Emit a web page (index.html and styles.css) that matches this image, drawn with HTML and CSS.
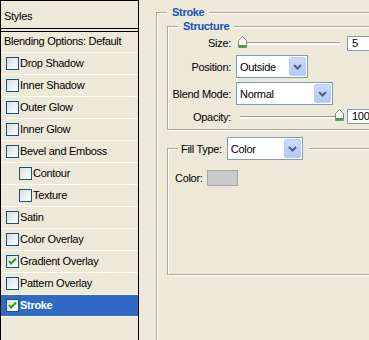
FILE: index.html
```html
<!DOCTYPE html>
<html>
<head>
  <title>Layer Style</title>
<link rel="stylesheet" href="styles.css">
</head>
<body>
  <div class="dialog">
    <div class="styles">
      <div class="styles-head">Styles</div>
      <ul class="fx-list">
        <li class="fx-plain">Blending Options: Default</li>
        <li class="fx-item"><span class="cb"></span>Drop Shadow</li>
        <li class="fx-item"><span class="cb"></span>Inner Shadow</li>
        <li class="fx-item"><span class="cb"></span>Outer Glow</li>
        <li class="fx-item"><span class="cb"></span>Inner Glow</li>
        <li class="fx-item"><span class="cb"></span>Bevel and Emboss</li>
        <li class="fx-item sub"><span class="cb"></span>Contour</li>
        <li class="fx-item sub"><span class="cb"></span>Texture</li>
        <li class="fx-item"><span class="cb"></span>Satin</li>
        <li class="fx-item"><span class="cb"></span>Color Overlay</li>
        <li class="fx-item"><span class="cb"><svg width="11" height="11" viewBox="0 0 11 11"><polyline points="2,5 4,7.5 9,2.5" fill="none" stroke="#21a121" stroke-width="2"/></svg></span>Gradient Overlay</li>
        <li class="fx-item"><span class="cb"></span>Pattern Overlay</li>
        <li class="fx-item selected"><span class="cb"><svg width="11" height="11" viewBox="0 0 11 11"><polyline points="2,5 4,7.5 9,2.5" fill="none" stroke="#21a121" stroke-width="2"/></svg></span>Stroke</li>
      </ul>
    </div>

    <div class="options">
      <fieldset class="group outer">
        <legend>Stroke</legend>

        <fieldset class="group inner">
          <legend>Structure</legend>
          <div class="form">
            <label>Size:</label>
            <div class="slider-row">
              <div class="slider">
                <div class="track"></div>
                <svg class="thumb" style="left:2px" width="9" height="12" viewBox="0 0 9 12"><path d="M.5 4.5 4.5.5l4 4v7h-8z" fill="#f6f6f1" stroke="#7d8a7d"/><path d="M1 9h7v2H1z" fill="#3fa63f"/></svg>
              </div>
              <div class="num">5</div>
            </div>

            <label>Position:</label>
            <div class="select w-pos">
              <span>Outside</span>
              <span class="arrow"><svg width="9" height="6" viewBox="0 0 9 6"><polyline points="1,1 4.5,4.5 8,1" fill="none" stroke="#4d6185" stroke-width="2"/></svg></span>
            </div>

            <label>Blend Mode:</label>
            <div class="select w-blend">
              <span>Normal</span>
              <span class="arrow"><svg width="9" height="6" viewBox="0 0 9 6"><polyline points="1,1 4.5,4.5 8,1" fill="none" stroke="#4d6185" stroke-width="2"/></svg></span>
            </div>

            <label>Opacity:</label>
            <div class="slider-row">
              <div class="slider short">
                <div class="track"></div>
                <svg class="thumb" style="left:99px" width="9" height="12" viewBox="0 0 9 12"><path d="M.5 4.5 4.5.5l4 4v7h-8z" fill="#f6f6f1" stroke="#7d8a7d"/><path d="M1 9h7v2H1z" fill="#3fa63f"/></svg>
              </div>
              <div class="num">100</div>
            </div>
          </div>
        </fieldset>

        <fieldset class="group inner fill">
          <legend class="legend-fill">
            <span>Fill Type:</span>
            <div class="select w-fill">
              <span>Color</span>
              <span class="arrow"><svg width="9" height="6" viewBox="0 0 9 6"><polyline points="1,1 4.5,4.5 8,1" fill="none" stroke="#4d6185" stroke-width="2"/></svg></span>
            </div>
          </legend>
          <div class="color-row">
            <span>Color:</span>
            <span class="swatch"></span>
          </div>
        </fieldset>
      </fieldset>
    </div>
  </div>
</body>
</html>
```

FILE: styles.css
```css
* {
  box-sizing: border-box;
}
body {
  margin: 0;
  background-color: #ece9d8;
  font-family: "Liberation Sans", Arial, sans-serif;
  font-size: 11px;
  letter-spacing: -0.3px;
  color: #000;
  overflow: hidden;
}
.dialog {
  display: flex;
  height: 340px;
}

/* left list */
.styles {
  width: 139px;
  flex: none;
  border-top: 1px solid #000;
  border-left: 1px solid #000;
  border-right: 1px solid #000;
}
.styles-head {
  height: 28px;
  padding: 9px 0 0 3px;
  line-height: 13px;
  border-bottom: 1px solid #000;
}
.fx-list {
  list-style: none;
  margin: 2px 0 0;
  padding: 0;
  border-top: 1px solid #000;
}
.fx-plain {
  height: 20px;
  padding: 3px 0 0 3px;
  line-height: 13px;
}
.fx-item {
  display: flex;
  align-items: center;
  height: 22px;
  padding-left: 5px;
  border-top: 1px solid #fbfaf4;
  line-height: 13px;
}
.fx-item:last-child {
  height: 23px;
  border-bottom: 1px solid #fbfaf4;
}
.sub {
  padding-left: 18px;
}
.selected {
  background-color: #316ac5;
  color: #fff;
  font-weight: bold;
}
.cb {
  flex: none;
  display: flex;
  width: 13px;
  height: 13px;
  margin-right: 1px;
  border: 1px solid #1c5180;
  background: linear-gradient(135deg, #dcdcd7, #fff);
}

/* right side */
.options {
  flex: 1;
  min-width: 0;
  padding: 5px 0 0 17px;
}
.group {
  margin: 0;
  border: 1px solid #aca899;
  box-shadow: inset 1px 1px 0 #fff, 1px 1px 0 #fff;
}
legend {
  padding: 0 5px;
  line-height: 14px;
  font-weight: bold;
  color: #1a4fbf;
  background-color: #ece9d8;
}
.outer {
  width: 300px;
  height: 400px;
  padding: 0 0 0 10px;
}
.inner {
  padding: 2px 0 5px 0;
}
.inner > legend {
  margin-left: 10px;
}
.form {
  display: grid;
  grid-template-columns: 63px auto;
  grid-template-rows: 16px 23px 23px 15px;
  column-gap: 5px;
  row-gap: 4px;
  align-items: center;
}
.form label {
  display: flex;
  justify-content: flex-end;
  white-space: nowrap;
}
.slider-row {
  display: flex;
  align-items: center;
  gap: 3px;
  height: 100%;
}
.slider {
  position: relative;
  width: 108px;
  height: 16px;
  padding-top: 7px;
}
.slider.short {
  height: 15px;
  padding-top: 7px;
}
.track {
  height: 3px;
  margin: 0 4px;
  border-top: 1px solid #a3a196;
  border-bottom: 1px solid #fff;
  background-color: #f4f3ee;
  border-radius: 1px;
}
.thumb {
  position: absolute;
  top: 1px;
}
.short .thumb {
  top: 0;
}
.num {
  flex: none;
  width: 34px;
  height: 15px;
  padding-left: 4px;
  line-height: 13px;
  border: 1px solid #7f9db9;
  background-color: #fff;
}
.select {
  display: flex;
  align-items: center;
  height: 23px;
  padding: 1px 1px 1px 3px;
  border: 1px solid #7f9db9;
  background-color: #fff;
  font-weight: normal;
  color: #000;
}
.w-pos {
  width: 72px;
}
.w-blend {
  width: 97px;
}
.w-fill {
  width: 76px;
}
.arrow {
  display: flex;
  align-items: center;
  justify-content: center;
  width: 17px;
  height: 100%;
  margin-left: auto;
  border: 1px solid #bccdf5;
  border-radius: 2px;
  background: linear-gradient(#cddbfc, #b4c8f6);
}
.fill {
  margin-top: 7px;
  padding: 10px 0 88px 7px;
}
.fill > .legend-fill {
  display: flex;
  align-items: center;
  gap: 5px;
  margin-left: 3px;
  padding: 0 6px 0 3px;
  font-weight: normal;
  color: #000;
}
.color-row {
  display: flex;
  align-items: center;
  gap: 4px;
  height: 16px;
}
.swatch {
  width: 31px;
  height: 16px;
  border: 1px solid #a4a4a0;
  background-color: #c9c9c9;
}
```
